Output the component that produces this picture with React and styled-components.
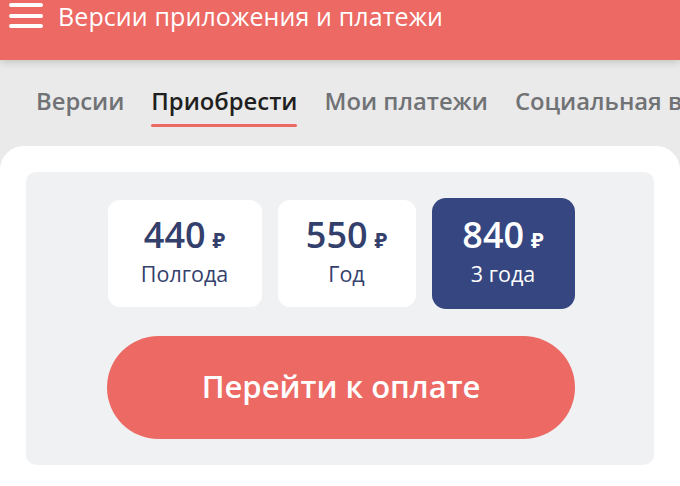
import React from "react";
import styled, { createGlobalStyle } from "styled-components";

const Global = createGlobalStyle`
  html, body { margin: 0; padding: 0; }
  body {
    background: #ffffff;
    font-family: "Open Sans", "Noto Sans", sans-serif;
    width: 680px;
    height: 486px;
    overflow: hidden;
  }
`;

const Page = styled.div`
  width: 680px;
  height: 486px;
  display: flex;
  flex-direction: column;
  background: #eaeaea;
  overflow: hidden;
`;

const Header = styled.header`
  height: 60px;
  flex-shrink: 0;
  background: #ec6964;
  display: flex;
  align-items: flex-start;
  gap: 15px;
  padding-left: 9px;
  box-shadow: 0 2px 8px rgba(0, 0, 0, 0.18);
  position: relative;
  z-index: 1;
`;

const Burger = styled.svg`
  width: 34px;
  height: 26px;
  margin-top: 2px;
  flex-shrink: 0;
`;

const Title = styled.h1`
  margin: 0;
  color: #ffffff;
  font-size: 25px;
  font-weight: 500;
  line-height: 32px;
  white-space: nowrap;
  letter-spacing: 0.1px;
`;

const Tabs = styled.nav`
  height: 86px;
  flex-shrink: 0;
  display: flex;
  align-items: flex-start;
  gap: 27px;
  padding: 24px 0 0 36px;
  box-sizing: border-box;
  white-space: nowrap;
  overflow: hidden;
`;

const Tab = styled.div`
  font-size: 23.8px;
  font-weight: 600;
  line-height: 34px;
  color: ${(p) => (p.$active ? "#1f1f1f" : "#707275")};
  padding-bottom: 9px;
  position: relative;
  flex-shrink: 0;
  &::after {
    content: "";
    display: ${(p) => (p.$active ? "block" : "none")};
    position: absolute;
    left: 0;
    right: 0;
    bottom: 0;
    height: 3px;
    border-radius: 2px;
    background: #ec6964;
  }
`;

const Card = styled.section`
  flex: 1;
  background: #ffffff;
  border-radius: 24px 24px 0 0;
  padding: 26px 26px 0;
  box-sizing: border-box;
`;

const Panel = styled.div`
  background: #f0f1f3;
  border-radius: 10px;
  padding: 26px 0 26px 2px;
  display: flex;
  flex-direction: column;
  align-items: center;
  gap: 27px;
`;

const Options = styled.div`
  display: flex;
  align-items: center;
  gap: 16px;
  height: 111px;
`;

const Option = styled.div`
  box-sizing: border-box;
  width: ${(p) => p.$w}px;
  height: ${(p) => (p.$selected ? 111 : 107)}px;
  border-radius: ${(p) => (p.$selected ? 14 : 12)}px;
  background: ${(p) => (p.$selected ? "#354680" : "#ffffff")};
  color: ${(p) => (p.$selected ? "#ffffff" : "#34406c")};
  display: flex;
  flex-direction: column;
  align-items: center;
  justify-content: center;
  padding-bottom: 4px;
`;

const Price = styled.div`
  font-size: 36px;
  font-weight: 600;
  line-height: 40px;
  display: flex;
  align-items: baseline;
  gap: 7px;
`;

const Rub = styled.span`
  font-size: 21px;
  font-weight: 700;
`;

const Period = styled.div`
  font-size: 21.5px;
  font-weight: 400;
  line-height: 28px;
`;

const PayButton = styled.button`
  width: 468px;
  height: 103px;
  border: none;
  border-radius: 52px;
  background: #ec6964;
  color: #ffffff;
  font-family: "Open Sans", "Noto Sans", sans-serif;
  font-size: 31px;
  font-weight: 600;
  cursor: pointer;
  padding: 0 0 4px 0;
`;

const options = [
  { price: "440", period: "Полгода", w: 154 },
  { price: "550", period: "Год", w: 138 },
  { price: "840", period: "3 года", w: 143, selected: true },
];

export default function App() {
  return (
    <>
      <Global />
      <Page>
        <Header>
          <Burger viewBox="0 0 34 26">
            <g stroke="#ffffff" strokeWidth="4" strokeLinecap="round">
              <line x1="2" y1="3" x2="32" y2="3" />
              <line x1="2" y1="14" x2="32" y2="14" />
              <line x1="2" y1="24" x2="32" y2="24" />
            </g>
          </Burger>
          <Title>Версии приложения и платежи</Title>
        </Header>
        <Tabs>
          <Tab>Версии</Tab>
          <Tab $active>Приобрести</Tab>
          <Tab>Мои платежи</Tab>
          <Tab>Социальная версия</Tab>
        </Tabs>
        <Card>
          <Panel>
            <Options>
              {options.map((o) => (
                <Option key={o.price} $w={o.w} $selected={o.selected}>
                  <Price>
                    {o.price}
                    <Rub>₽</Rub>
                  </Price>
                  <Period>{o.period}</Period>
                </Option>
              ))}
            </Options>
            <PayButton>Перейти к оплате</PayButton>
          </Panel>
        </Card>
      </Page>
    </>
  );
}
